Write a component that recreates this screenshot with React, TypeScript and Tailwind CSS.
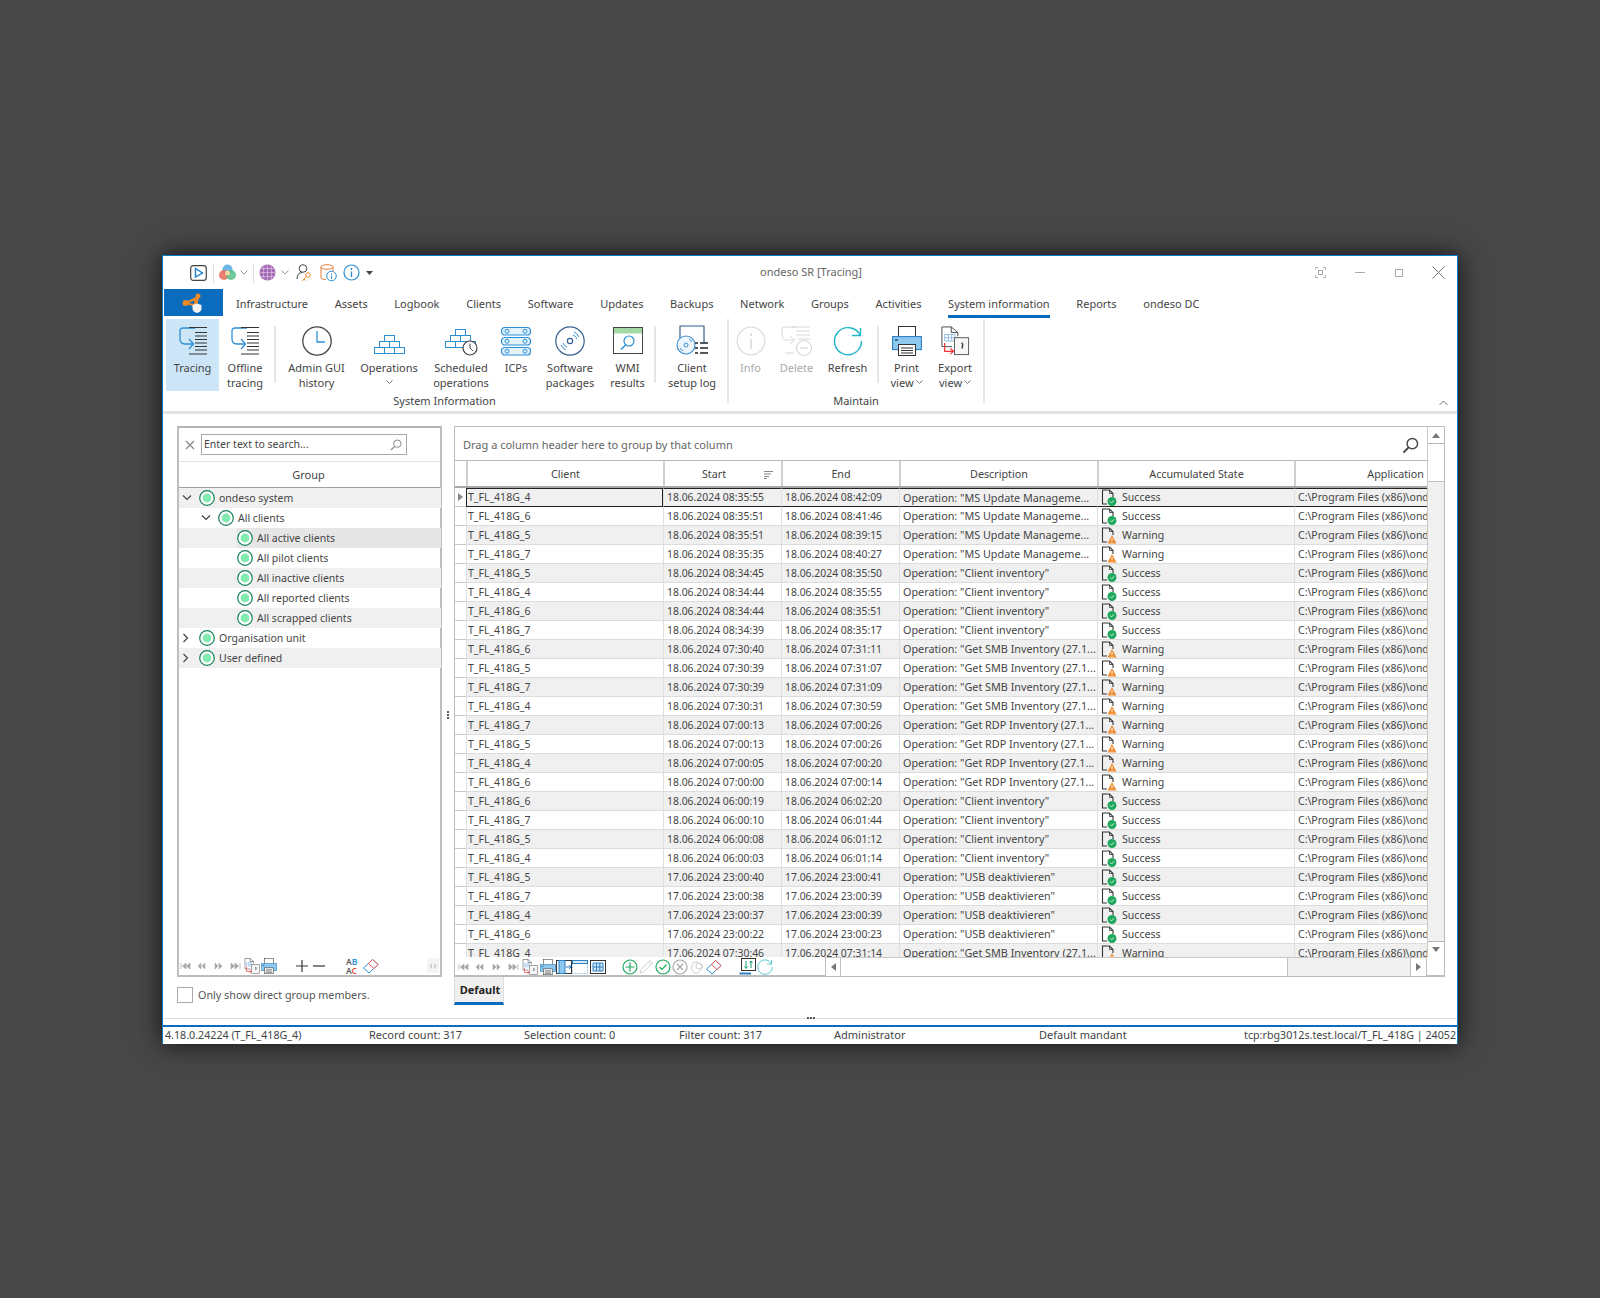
import type { ReactNode } from 'react';

type State = 'Success' | 'Warning';

interface LogRow {
  client: string;
  start: string;
  end: string;
  description: string;
  state: State;
}

const ms = 'Operation: "MS Update Manageme...';
const inv = 'Operation: "Client inventory"';
const smb = 'Operation: "Get SMB Inventory (27.1...';
const rdp = 'Operation: "Get RDP Inventory (27.1...';
const usb = 'Operation: "USB deaktivieren"';

const raw: [string, string, string, string, string, State][] = [
  ['4', '18.06.2024', '08:35:55', '08:42:09', ms, 'Success'],
  ['6', '18.06.2024', '08:35:51', '08:41:46', ms, 'Success'],
  ['5', '18.06.2024', '08:35:51', '08:39:15', ms, 'Warning'],
  ['7', '18.06.2024', '08:35:35', '08:40:27', ms, 'Warning'],
  ['5', '18.06.2024', '08:34:45', '08:35:50', inv, 'Success'],
  ['4', '18.06.2024', '08:34:44', '08:35:55', inv, 'Success'],
  ['6', '18.06.2024', '08:34:44', '08:35:51', inv, 'Success'],
  ['7', '18.06.2024', '08:34:39', '08:35:17', inv, 'Success'],
  ['6', '18.06.2024', '07:30:40', '07:31:11', smb, 'Warning'],
  ['5', '18.06.2024', '07:30:39', '07:31:07', smb, 'Warning'],
  ['7', '18.06.2024', '07:30:39', '07:31:09', smb, 'Warning'],
  ['4', '18.06.2024', '07:30:31', '07:30:59', smb, 'Warning'],
  ['7', '18.06.2024', '07:00:13', '07:00:26', rdp, 'Warning'],
  ['5', '18.06.2024', '07:00:13', '07:00:26', rdp, 'Warning'],
  ['4', '18.06.2024', '07:00:05', '07:00:20', rdp, 'Warning'],
  ['6', '18.06.2024', '07:00:00', '07:00:14', rdp, 'Warning'],
  ['6', '18.06.2024', '06:00:19', '06:02:20', inv, 'Success'],
  ['7', '18.06.2024', '06:00:10', '06:01:44', inv, 'Success'],
  ['5', '18.06.2024', '06:00:08', '06:01:12', inv, 'Success'],
  ['4', '18.06.2024', '06:00:03', '06:01:14', inv, 'Success'],
  ['5', '17.06.2024', '23:00:40', '23:00:41', usb, 'Success'],
  ['7', '17.06.2024', '23:00:38', '23:00:39', usb, 'Success'],
  ['4', '17.06.2024', '23:00:37', '23:00:39', usb, 'Success'],
  ['6', '17.06.2024', '23:00:22', '23:00:23', usb, 'Success'],
  ['4', '17.06.2024', '07:30:46', '07:31:14', smb, 'Warning'],
];

const rows: LogRow[] = raw.map(([n, d, s, e, description, state]) => ({
  client: `T_FL_418G_${n}`,
  start: `${d} ${s}`,
  end: `${d} ${e}`,
  description,
  state,
}));

const tabs = ['Infrastructure', 'Assets', 'Logbook', 'Clients', 'Software', 'Updates', 'Backups', 'Network', 'Groups', 'Activities'];
const colsClass = 'grid grid-cols-[11px_197px_118px_118px_198px_197px_133px]';

function Icon({ w, h = w, children, className }: { w: number; h?: number; children: ReactNode; className?: string }) {
  return (
    <svg width={w} height={h} viewBox={`0 0 ${w} ${h}`} fill="none" className={`shrink-0 ${className ?? ''}`}>
      {children}
    </svg>
  );
}

function Chevron({ w = 8, up = false, color = '#777' }: { w?: number; up?: boolean; color?: string }) {
  const h = w / 2 + 1;
  return (
    <Icon w={w} h={h}>
      <path d={up ? `M.5 ${h - 0.5}L${w / 2} 1L${w - 0.5} ${h - 0.5}` : `M.5 .5L${w / 2} ${h - 1}L${w - 0.5} .5`} stroke={color} />
    </Icon>
  );
}

function TraceIcon() {
  const blue = '#2b8fd6';
  const ink = '#333';
  return (
    <Icon w={30} h={30}>
      <path d="M17 2H5Q2 2 2 5V13Q2 18 7 18H15" stroke={blue} strokeWidth="1.3" />
      <path d="M11 13L15.5 18L11 23" stroke={blue} strokeWidth="1.3" />
      <path d="M11 1.5H29M17 6.5H29M17 10H29M17 13.5H29M17 17H29M17 20.5H29M17 24H29M11 28H29" stroke={ink} strokeWidth="1" />
    </Icon>
  );
}

function Clock({ size = 30 }: { size?: number }) {
  const c = size / 2;
  return (
    <Icon w={size} h={size}>
      <circle cx={c} cy={c} r={c - 0.8} stroke="#444" strokeWidth="1.3" />
      <path d={`M${c} ${c - 10}V${c + 1}H${c + 8}`} stroke="#2b8fd6" strokeWidth="1.3" />
    </Icon>
  );
}

function Bricks() {
  return (
    <g stroke="#2b8fd6" strokeWidth="1">
      <rect x="11.5" y=".5" width="10" height="6" />
      <rect x="6.5" y="6.5" width="10" height="6" />
      <rect x="16.5" y="6.5" width="10" height="6" />
      <rect x="1.5" y="12.5" width="10" height="6" />
      <rect x="11.5" y="12.5" width="10" height="6" />
      <rect x="21.5" y="12.5" width="10" height="6" />
    </g>
  );
}

function OperationsIcon() {
  return (
    <Icon w={33} h={30}>
      <g transform="translate(0 9)">
        <Bricks />
      </g>
    </Icon>
  );
}

function ScheduledIcon() {
  return (
    <Icon w={34} h={30}>
      <g transform="translate(0 3)">
        <Bricks />
      </g>
      <circle cx="26" cy="22" r="7" fill="#fff" stroke="#444" strokeWidth="1.2" />
      <path d="M26 17.5V22L29 25" stroke="#444" />
    </Icon>
  );
}

function IcpsIcon() {
  return (
    <Icon w={30} h={30}>
      {[1, 11, 21].map((y) => (
        <g key={y} stroke="#2b8fd6">
          <rect x=".5" y={y + 0.5} width="29" height="7.5" rx="3.5" fill="#e4f2fb" strokeWidth="1.2" />
          <circle cx="6" cy={y + 4.2} r="2" />
          <circle cx="24" cy={y + 4.2} r="2" />
        </g>
      ))}
    </Icon>
  );
}

function DiscIcon() {
  return (
    <Icon w={30} h={30}>
      <circle cx="15" cy="15" r="14.2" stroke="#35618f" strokeWidth="1.2" />
      <circle cx="15" cy="15" r="2.6" stroke="#35618f" strokeWidth="1.2" />
      <path d="M6 19Q8 23 11 24M8 17Q9 20 12 21M24 11Q22 7 19 6M22 13Q21 10 18 9" stroke="#3d8fd0" strokeWidth="1" />
    </Icon>
  );
}

function WmiIcon() {
  return (
    <Icon w={30} h={28}>
      <rect x=".5" y=".5" width="29" height="26" stroke="#444" />
      <rect x="1" y="1" width="28" height="5.5" fill="#a4d8a6" />
      <circle cx="16" cy="14" r="5" stroke="#2b8fd6" strokeWidth="1.2" />
      <path d="M12.5 18L8 22.5" stroke="#2b8fd6" strokeWidth="1.4" />
    </Icon>
  );
}

function SetupLogIcon() {
  return (
    <Icon w={32} h={32}>
      <path d="M4 13V1H28V18" stroke="#35618f" strokeWidth="1.2" />
      <circle cx="10" cy="20" r="9" fill="#eef6fc" stroke="#3d8fd0" strokeWidth="1.1" />
      <circle cx="10" cy="20" r="2" stroke="#3d8fd0" />
      <path d="M4 23Q5 25 7 26M16 17Q15 15 13 14" stroke="#3d8fd0" />
      <path d="M19 18H22M24 18H32M19 23H22M24 23H32M19 28H22M24 28H32" stroke="#222" strokeWidth="1.4" />
    </Icon>
  );
}

function InfoDim() {
  return (
    <Icon w={30} h={30}>
      <circle cx="15" cy="15" r="13.8" stroke="#dedede" strokeWidth="1.3" />
      <path d="M15 7V10M15 13V23" stroke="#dedede" strokeWidth="1.8" />
    </Icon>
  );
}

function DeleteDim() {
  return (
    <Icon w={32} h={32}>
      <g stroke="#d8d8d8" strokeWidth="1">
        <path d="M15 2H4Q1 2 1 5V10Q1 15 6 15H13M9 11L13.5 15L9 19" />
        <path d="M10 2H29M15 6H29M15 10H29M17 14H29M4 28H13" />
      </g>
      <circle cx="23" cy="23" r="7.5" fill="#fff" stroke="#d8d8d8" strokeWidth="1.2" />
      <path d="M19 23H27" stroke="#d8d8d8" strokeWidth="1.2" />
    </Icon>
  );
}

function RefreshIcon({ size = 30 }: { size?: number }) {
  return (
    <svg width={size} height={size} viewBox="0 0 30 30" fill="none" className="shrink-0">
      <path d="M27 9A13.5 13.5 0 1 0 28.5 15" stroke="#1db5c9" strokeWidth="1.4" />
      <path d="M27.5 2V9.5H19" stroke="#1db5c9" strokeWidth="1.4" />
    </svg>
  );
}

function PrinterIcon({ size = 30 }: { size?: number }) {
  return (
    <svg width={size} height={size} viewBox="0 0 30 30" fill="none" className="shrink-0">
      <rect x="6.5" y=".5" width="17" height="11" fill="#fff" stroke="#333" />
      <rect x=".6" y="10.6" width="28.8" height="13" fill="#8ec8ee" stroke="#2b7fc2" strokeWidth="1.1" />
      <rect x="3" y="13" width="3" height="2" fill="#2b6fa8" />
      <rect x="6.5" y="18.5" width="17" height="11" fill="#fff" stroke="#333" />
      <path d="M9 22H21M9 24.5H21M9 27H21" stroke="#333" />
    </svg>
  );
}

function ExportIcon({ size = 30 }: { size?: number }) {
  return (
    <svg width={size} height={size} viewBox="0 0 30 32" fill="none" className="shrink-0">
      <path d="M12 22H1V1H11L18 7V11" stroke="#444" />
      <path d="M11 1V7H18" stroke="#444" />
      <path d="M4 9H15V16H4ZM4 12.5H15M8 9V16M11.5 9V16" stroke="#8dbbe0" />
      <rect x="14.5" y="12.5" width="15" height="18" fill="#f6f6f6" stroke="#555" />
      <path d="M22 18Q24 19 22.5 24" stroke="#333" strokeWidth="1.5" />
      <path d="M4 18V27H13M10 24L13.5 27L10 30" stroke="#e33" strokeWidth="1.3" />
    </svg>
  );
}

function GroupDot() {
  return (
    <Icon w={16} h={16}>
      <circle cx="8" cy="8" r="7.3" fill="#fff" stroke="#14805a" strokeWidth="1.2" />
      <circle cx="8" cy="8" r="4.4" fill="#82eab0" />
    </Icon>
  );
}

function DocState({ state }: { state: State }) {
  return (
    <Icon w={18} h={17}>
      <path d="M6 15H1.5V1H8.5L12 4.5V8" stroke="#333" strokeWidth="1.1" />
      <path d="M8.5 1V4.5H12" stroke="#333" strokeWidth=".8" />
      {state === 'Success' ? (
        <>
          <circle cx="11" cy="12.5" r="4.5" fill="#1fa85b" />
          <path d="M9 12.5L10.5 14L13 11.3" stroke="#c8f0d8" />
        </>
      ) : (
        <>
          <path d="M11 8L15.5 16.5H6.5Z" fill="#ee8a2c" />
          <path d="M11 11V14M11 14.8V15.6" stroke="#fff" />
        </>
      )}
    </Icon>
  );
}

function SearchGlass({ size = 12, color = '#8a8a8a' }: { size?: number; color?: string }) {
  return (
    <svg width={size} height={size} viewBox="0 0 12 12" fill="none" className="shrink-0">
      <circle cx="7.3" cy="4.7" r="3.7" stroke={color} strokeWidth="1" />
      <path d="M4.6 7.4L1 11" stroke={color} strokeWidth="1.3" />
    </svg>
  );
}

function NavButtons({ className }: { className: string }) {
  return (
    <div className={`flex items-center ${className}`}>
      <Icon w={11} h={8}>
        <path d="M1 1V7M6 1L2.5 4L6 7ZM10 1L6.5 4L10 7Z" stroke="#a8a8a8" fill="#a8a8a8" strokeWidth=".7" />
      </Icon>
      <Icon w={9} h={8} className="ml-[6px]">
        <path d="M4 1L1 4L4 7ZM8 1L5 4L8 7Z" fill="#a8a8a8" stroke="#a8a8a8" strokeWidth=".6" />
      </Icon>
      <Icon w={9} h={8} className="ml-[8px]">
        <path d="M1 1L4 4L1 7ZM5 1L8 4L5 7Z" fill="#a8a8a8" stroke="#a8a8a8" strokeWidth=".6" />
      </Icon>
      <Icon w={11} h={8} className="ml-[7px]">
        <path d="M10 1V7M1 1L4.5 4L1 7ZM5 1L8.5 4L5 7Z" stroke="#a8a8a8" fill="#a8a8a8" strokeWidth=".7" />
      </Icon>
    </div>
  );
}

function Eraser() {
  return (
    <Icon w={18} h={18}>
      <path d="M1.5 11L10.5 2.5L16 7.5L7 16Z" stroke="#2b8fd6" fill="#fff" />
      <path d="M10.5 2.5L16 7.5L12 11.5L6.5 6.5Z" stroke="#e5534b" fill="#fff" />
    </Icon>
  );
}

function RibbonButton({
  width,
  icon,
  lines,
  dim = false,
  active = false,
  arrow = false,
  arrowBelow = false,
}: {
  width: string;
  icon: ReactNode;
  lines: string[];
  dim?: boolean;
  active?: boolean;
  arrow?: boolean;
  arrowBelow?: boolean;
}) {
  return (
    <div className={`${width} h-[72px] flex flex-col items-center shrink-0 ${active ? 'bg-[#cde6f7]' : ''}`}>
      <div className="h-[41px] flex items-center justify-center pt-[3px]">{icon}</div>
      <div className={`flex flex-col items-center leading-[15px] ${dim ? 'text-[#aaaaaa]' : 'text-[#444]'}`}>
        {lines.map((l, i) => (
          <span key={l} className="flex items-center gap-[2px] whitespace-nowrap">
            {l}
            {arrow && i === lines.length - 1 && <Chevron w={7} />}
          </span>
        ))}
        {arrowBelow && (
          <span className="h-[15px] flex items-center">
            <Chevron w={7} />
          </span>
        )}
      </div>
    </div>
  );
}

function RibbonSep({ className = '' }: { className?: string }) {
  return <div className={`w-[2px] h-[57px] mt-[7px] bg-[#e6e6e6] shrink-0 ${className}`} />;
}

function TreeRow({
  label,
  indent,
  chevron,
  alt = false,
  selected = false,
}: {
  label: string;
  indent: 'l1' | 'l2' | 'l3';
  chevron?: 'down' | 'right';
  alt?: boolean;
  selected?: boolean;
}) {
  const pad = indent === 'l1' ? 'pl-[2px]' : indent === 'l2' ? 'pl-[21px]' : 'pl-[40px]';
  return (
    <div className={`h-[20px] w-[262px] flex items-center ${pad} ${alt ? 'bg-[#f0f0f0]' : ''}`}>
      <div className="w-[18px] h-[20px] shrink-0 flex items-center pl-[1px]">
        {chevron === 'down' && (
          <Icon w={10} h={6}>
            <path d="M1 .5L5 4.5L9 .5" stroke="#444" strokeWidth="1.2" />
          </Icon>
        )}
        {chevron === 'right' && (
          <Icon w={6} h={10} className="ml-[1px]">
            <path d="M.5 1L4.5 5L.5 9" stroke="#444" strokeWidth="1.2" />
          </Icon>
        )}
      </div>
      <div className={`flex items-center self-stretch flex-1 ${selected ? 'bg-[#e6e6e6]' : ''}`}>
        <GroupDot />
        <span className="ml-[4px] pt-[2px] text-[#444] text-[10.5px] whitespace-nowrap">{label}</span>
      </div>
    </div>
  );
}

function LeftPanel() {
  return (
    <div className="w-[265px] flex flex-col shrink-0">
      <div className="h-[551px] border-2 border-[#bdbdbd] border-t-[#b4b4b4] flex flex-col">
        <div className="h-[34px] flex items-center pl-[6px] border-b border-[#e2e2e2]">
          <Icon w={10} h={10}>
            <path d="M1 1L9 9M9 1L1 9" stroke="#888" strokeWidth="1.2" />
          </Icon>
          <div className="ml-[6px] w-[206px] h-[21px] border border-[#a8a8a8] flex items-center justify-between pl-[2px] pr-[4px]">
            <span className="text-[#444] text-[10.5px]">Enter text to search...</span>
            <SearchGlass />
          </div>
        </div>
        <div className="h-[26px] flex items-center justify-center pt-[2px] pr-[2px] border-b border-[#a0a0a0] text-[#444]">Group</div>
        <div className="flex-1 flex flex-col">
          <TreeRow label="ondeso system" indent="l1" chevron="down" alt />
          <TreeRow label="All clients" indent="l2" chevron="down" />
          <TreeRow label="All active clients" indent="l3" alt selected />
          <TreeRow label="All pilot clients" indent="l3" />
          <TreeRow label="All inactive clients" indent="l3" alt />
          <TreeRow label="All reported clients" indent="l3" />
          <TreeRow label="All scrapped clients" indent="l3" alt />
          <TreeRow label="Organisation unit" indent="l1" chevron="right" />
          <TreeRow label="User defined" indent="l1" chevron="right" alt />
        </div>
        <div className="h-[19px] flex items-center pl-[1px]">
          <NavButtons className="w-[64px]" />
          <ExportIcon size={16} />
          <span className="ml-[1px]">
            <PrinterIcon size={16} />
          </span>
          <Icon w={14} h={14} className="ml-[18px]">
            <path d="M7 1V13M1 7H13" stroke="#333" strokeWidth="1.2" />
          </Icon>
          <Icon w={12} h={14} className="ml-[4px]">
            <path d="M0 7H12" stroke="#333" strokeWidth="1.2" />
          </Icon>
          <div className="ml-[21px] w-[16px] h-[18px] flex flex-col text-[8.5px] font-semibold">
            <span className="h-[9px] leading-[9px]">
              <span className="text-[#555]">A</span>
              <span className="text-[#2b8fd6]">B</span>
            </span>
            <span className="h-[9px] leading-[9px]">
              <span className="text-[#555]">A</span>
              <span className="text-[#e5534b]">C</span>
            </span>
          </div>
          <Eraser />
          <div className="ml-auto mr-[1px] w-[12px] h-[15px] bg-[#f4f4f4] flex items-center justify-center">
            <Icon w={10} h={8}>
              <path d="M4 1L1 4L4 7ZM6 1L9 4L6 7Z" fill="#d0d0d0" />
            </Icon>
          </div>
        </div>
      </div>
      <div className="flex items-center mt-[10px]">
        <div className="w-[16px] h-[16px] border border-[#a8a8a8]" />
        <span className="ml-[5px] text-[#555] text-[10.75px]">Only show direct group members.</span>
      </div>
    </div>
  );
}

function GridRow({ row, index }: { row: LogRow; index: number }) {
  const focused = index === 0;
  const bg = index % 2 === 0 ? 'bg-[#f0f0f0]' : 'bg-white';
  const line = focused ? 'border-y border-[#222]' : 'border-b border-[#dcdcdc]';
  const cell = `h-[19px] flex items-center pl-[3px] whitespace-nowrap overflow-hidden text-[#444] border-l border-l-[#dfdfdf] ${line}`;
  return (
    <div className={`${colsClass} ${bg}`}>
      <div className="h-[19px] bg-white border-b border-[#c8c8c8] flex items-center justify-center">
        {focused && (
          <Icon w={5} h={8}>
            <path d="M0 0L5 4L0 8Z" fill="#888" />
          </Icon>
        )}
      </div>
      <div className={`${cell} text-[10.5px] pt-[1px] ${focused ? '!border-l-[#222] border-r border-r-[#222] !pl-[1px]' : '!pl-[1px]'}`}>{row.client}</div>
      <div className={`${cell} text-[10.4px] pt-[1px]`}>{row.start}</div>
      <div className={`${cell} text-[10.4px] pt-[1px]`}>{row.end}</div>
      <div className={`${cell} text-[10.8px] pt-[1px]`}>{row.description}</div>
      <div className={cell}>
        <DocState state={row.state} />
        <span className="ml-[3px] pt-[1px] text-[10.6px]">{row.state}</span>
      </div>
      <div className={`${cell} text-[10.5px] pt-[1px]`}>C:\Program Files (x86)\ondeso\SR</div>
    </div>
  );
}

function HeaderCell({ children, right = false, className = '' }: { children?: ReactNode; right?: boolean; className?: string }) {
  return (
    <div className={`h-[25px] flex items-center pt-[2px] border-l-2 border-l-[#d0d0d0] text-[#444] text-[10.75px] relative ${right ? 'justify-end pr-[3px]' : 'justify-center'} ${className}`}>
      {children}
    </div>
  );
}

function GridToolbar() {
  return (
    <div className="w-[370px] shrink-0 h-[19px] flex items-center pl-[3px]">
      <NavButtons className="w-[64px]" />
      <ExportIcon size={16} />
      <span className="ml-[2px]">
        <PrinterIcon size={16} />
      </span>
      <Icon w={16} h={16}>
        <rect x=".5" y="1.5" width="15" height="13" stroke="#333" />
        <rect x="3" y="1.5" width="6" height="13" fill="#8ec8ee" stroke="#2b7fc2" />
        <path d="M10 8H15M13 6L15 8L13 10" stroke="#2b7fc2" />
      </Icon>
      <Icon w={16} h={16}>
        <rect x=".5" y="1.5" width="15" height="13" stroke="#9cc4e2" strokeDasharray="2 1" />
        <rect x=".5" y="1.5" width="15" height="3" fill="#d8ebf8" stroke="#2b7fc2" />
      </Icon>
      <Icon w={16} h={16} className="ml-[2px]">
        <rect x=".5" y="1.5" width="15" height="13" stroke="#333" />
        <path d="M3 4H13V12H3ZM3 8H13M6.5 4V12M9.8 4V12" stroke="#2b7fc2" fill="#cfe6f7" />
      </Icon>
      <Icon w={16} h={16} className="ml-[16px]">
        <circle cx="8" cy="8" r="7" stroke="#1fa85b" strokeWidth="1.2" />
        <path d="M8 3.5V12.5M3.5 8H12.5" stroke="#1fa85b" strokeWidth="1.2" />
      </Icon>
      <Icon w={16} h={16}>
        <path d="M2 14L3 10.5L12 1.5L14.5 4L5.5 13ZM10.5 3L13 5.5" stroke="#cfcfcf" />
      </Icon>
      <Icon w={16} h={16} className="ml-[1px]">
        <circle cx="8" cy="8" r="7" stroke="#1fa85b" strokeWidth="1.2" />
        <path d="M4.5 8L7 10.5L11.5 5.5" stroke="#1fa85b" strokeWidth="1.2" />
      </Icon>
      <Icon w={16} h={16} className="ml-[1px]">
        <circle cx="8" cy="8" r="7" stroke="#a8a8a8" strokeWidth="1.2" />
        <path d="M5 5L11 11M11 5L5 11" stroke="#a8a8a8" strokeWidth="1.2" />
      </Icon>
      <Icon w={16} h={16} className="ml-[1px]">
        <path d="M5 3H9L14 8L9 14H5L2 9Z" stroke="#d0d0d0" />
        <circle cx="10" cy="7" r="3" stroke="#d0d0d0" />
      </Icon>
      <Eraser />
      <Icon w={18} h={17} className="ml-[16px]">
        <rect x="2.5" y=".5" width="14" height="12" stroke="#333" />
        <path d="M7 3V10M5.5 8.5L7 10.5L8.5 8.5M12 10V3M10.5 5L12 3L13.5 5" stroke="#1b9e76" />
        <path d="M.5 15.5H12" stroke="#2b7fc2" strokeWidth="2" />
      </Icon>
      <span>
        <RefreshIcon size={16} />
      </span>
    </div>
  );
}

function GridPanel() {
  return (
    <div className="w-[991px] shrink-0 flex flex-col ml-[12px]">
      <div className="h-[551px] border-b-2 border-r border-l border-t border-[#bdbdbd] flex flex-col">
        <div className="flex h-[530px]">
          <div className="w-[972px] flex flex-col">
            <div className="h-[34px] shrink-0 flex items-center justify-between pl-[8px] pr-[8px] pt-[3px] border-b border-[#b8b8b8]">
              <span className="text-[#666] text-[11px]">Drag a column header here to group by that column</span>
              <SearchGlass size={17} color="#444" />
            </div>
            <div className={`${colsClass} shrink-0 border-b-2 border-[#a8a8a8]`}>
              <div className="h-[25px]" />
              <HeaderCell>Client</HeaderCell>
              <HeaderCell className="pr-[18px]">
                Start
                <Icon w={9} h={8} className="absolute right-[8px] top-[10px]">
                  <path d="M0 .5H9M0 3H7M0 5.5H5M0 7.5H3" stroke="#888" />
                </Icon>
              </HeaderCell>
              <HeaderCell>End</HeaderCell>
              <HeaderCell>Description</HeaderCell>
              <HeaderCell>Accumulated State</HeaderCell>
              <HeaderCell right>Application</HeaderCell>
            </div>
            <div className="flex-1 overflow-hidden">
              {rows.map((r, i) => (
                <GridRow key={i} row={r} index={i} />
              ))}
            </div>
          </div>
          <div className="w-[17px] flex flex-col bg-[#f0f0f0] border-l border-[#c8c8c8]">
            <div className="h-[17px] bg-white border-b border-[#b8b8b8] flex items-center justify-center">
              <Icon w={8} h={5}>
                <path d="M4 0L8 5H0Z" fill="#777" />
              </Icon>
            </div>
            <div className="h-[38px] bg-white border-b border-[#c0c0c0]" />
            <div className="flex-1" />
            <div className="h-[16px] bg-white border-t border-[#b8b8b8] flex items-center justify-center">
              <Icon w={8} h={5}>
                <path d="M4 5L8 0H0Z" fill="#777" />
              </Icon>
            </div>
          </div>
        </div>
        <div className="h-[19px] flex">
          <GridToolbar />
          <div className="w-[602px] flex bg-[#f0f0f0] border-t border-[#c8c8c8]">
            <div className="w-[16px] bg-white border-x border-[#c0c0c0] flex items-center justify-center">
              <Icon w={5} h={8}>
                <path d="M5 0L0 4L5 8Z" fill="#777" />
              </Icon>
            </div>
            <div className="w-[447px] bg-white border-r border-[#c0c0c0]" />
            <div className="flex-1" />
            <div className="w-[17px] bg-white border-x border-[#c0c0c0] flex items-center justify-center">
              <Icon w={5} h={8}>
                <path d="M0 0L5 4L0 8Z" fill="#777" />
              </Icon>
            </div>
          </div>
        </div>
      </div>
      <div className="w-[50px] h-[28px] bg-[#f0f0f0] border-b-[3px] border-[#0b6bbd] flex items-center justify-center pl-[2px] pt-[1px] font-bold text-[#222] border-x border-x-[#dcdcdc]">
        Default
      </div>
    </div>
  );
}

export default function App() {
  return (
    <div className="min-h-[1298px] bg-[#474747] pt-[255px] pl-[162px] font-['Noto_Sans',sans-serif] text-[11px]">
      <div className="w-[1296px] h-[789px] bg-white border border-[#0b7ac4] border-b-0 shadow-[0_0_24px_rgba(0,0,0,0.75)] flex flex-col">
        {/* title bar */}
        <div className="h-[33px] flex items-center relative shrink-0">
          <div className="flex items-center pl-[27px]">
            <Icon w={17} h={16}>
              <rect x=".7" y=".7" width="15.6" height="14.6" rx="2.5" stroke="#444" strokeWidth="1.2" />
              <path d="M5.5 3.5V12L12.5 8Z" stroke="#1d7fd0" strokeWidth="1.4" />
            </Icon>
            <div className="w-px h-[20px] bg-[#dddddd] ml-[6px]" />
            <Icon w={17} h={17} className="ml-[5px]">
              <circle cx="8.5" cy="5.5" r="5" fill="#6fb6e8" />
              <circle cx="5" cy="11" r="5" fill="#e86a5c" fillOpacity=".85" />
              <circle cx="12" cy="11" r="5" fill="#56c08a" fillOpacity=".85" />
              <circle cx="8.5" cy="9" r="2.5" fill="#f3d6a0" />
            </Icon>
            <span className="ml-[4px]">
              <Chevron w={8} color="#999" />
            </span>
            <div className="w-px h-[20px] bg-[#dddddd] ml-[5px]" />
            <Icon w={17} h={17} className="ml-[5px]">
              <circle cx="8.5" cy="8.5" r="8" fill="#a56ab5" />
              <path d="M.5 8.5H16.5M8.5 .5V16.5M2 4.5H15M2 12.5H15M5 1.5Q3.5 8.5 5 15.5M12 1.5Q13.5 8.5 12 15.5" stroke="#e3cfe9" strokeWidth=".6" />
            </Icon>
            <span className="ml-[5px]">
              <Chevron w={8} color="#999" />
            </span>
            <Icon w={18} h={18} className="ml-[7px]">
              <circle cx="7" cy="4.5" r="3.8" stroke="#444" />
              <path d="M1 15Q1 9 6 8.5" stroke="#444" />
              <circle cx="12" cy="11" r="2.3" stroke="#e88d2e" />
              <path d="M10.5 12.5L6 17M8 15L9.5 16.5" stroke="#e88d2e" />
            </Icon>
            <Icon w={17} h={18} className="ml-[6px]">
              <path d="M1 3V14Q1 15.5 6 15.5M13 7V3" stroke="#e0803a" />
              <ellipse cx="7" cy="3" rx="6" ry="2.3" stroke="#e0803a" />
              <circle cx="11.5" cy="12" r="4.8" fill="#fff" stroke="#2b8fd6" />
              <path d="M11.5 9.5V10.5M11.5 11.5V15" stroke="#2b8fd6" />
            </Icon>
            <Icon w={17} h={17} className="ml-[6px]">
              <circle cx="8.5" cy="8.5" r="7.5" stroke="#2b8fd6" strokeWidth="1.2" />
              <path d="M8.5 4V6M8.5 7.5V13" stroke="#2b8fd6" strokeWidth="1.4" />
            </Icon>
            <Icon w={7} h={4} className="ml-[6px]">
              <path d="M0 0H7L3.5 4Z" fill="#444" />
            </Icon>
          </div>
          <span className="absolute left-[597px] text-[#666] text-[11px] whitespace-nowrap">ondeso SR [Tracing]</span>
          <div className="ml-auto flex items-center pr-[12px]">
            <Icon w={11} h={11}>
              <path d="M0 3V.5H3M8 .5H10.5V3M.5 8V10.5H3M8 10.5H10.5V8" stroke="#aaa" />
              <rect x="3.5" y="3.5" width="4" height="4" stroke="#aaa" />
            </Icon>
            <div className="w-[10px] h-px bg-[#aaaaaa] ml-[29px]" />
            <div className="w-[8px] h-[8px] border border-[#aaaaaa] ml-[30px]" />
            <Icon w={13} h={13} className="ml-[29px]">
              <path d="M.5 .5L12.5 12.5M12.5 .5L.5 12.5" stroke="#777" />
            </Icon>
          </div>
        </div>
        {/* tabs */}
        <div className="h-[30px] flex shrink-0">
          <div className="ml-[1px] w-[59px] h-[27px] bg-[#0b6bbd] flex items-center justify-center">
            <Icon w={24} h={22}>
              <path d="M4 11L16 5L14 14L4 11Z" fill="#f08a24" stroke="#f08a24" strokeWidth="2" />
              <path d="M6.5 11L12.5 8.5L12 12Z" fill="#0b6bbd" />
              <circle cx="3.5" cy="11" r="3" fill="#f08a24" />
              <circle cx="16" cy="4" r="2.5" fill="#f08a24" />
              <path d="M15 11.5L19.5 13V16.5Q19.5 19.5 15 21Q10.5 19.5 10.5 16.5V13Z" fill="#f2f2f2" />
            </Icon>
          </div>
          <div className="ml-[13px] flex gap-[26.7px] text-[#444] h-[29px] items-center">
            {tabs.map((t) => (
              <span key={t} className="whitespace-nowrap pt-[2px]">
                {t}
              </span>
            ))}
            <span className="whitespace-nowrap relative h-[29px] flex items-center pt-[2px]">
              System information
              <span className="absolute left-0 right-0 bottom-0 h-[3px] bg-[#0b6bbd]" />
            </span>
            <span className="whitespace-nowrap pt-[2px]">Reports</span>
            <span className="whitespace-nowrap pt-[2px]">ondeso DC</span>
          </div>
        </div>
        {/* ribbon */}
        <div className="h-[95px] flex pl-[3px] shrink-0 border-b-[3px] border-[#e4e4e4] relative">
          <div className="flex flex-col">
            <div className="flex">
              <RibbonButton width="w-[53px]" active icon={<TraceIcon />} lines={['Tracing']} />
              <RibbonButton width="w-[52px]" icon={<TraceIcon />} lines={['Offline', 'tracing']} />
              <RibbonSep className="ml-[3px]" />
              <RibbonButton width="w-[77px] pl-[4px]" icon={<Clock />} lines={['Admin GUI', 'history']} />
              <RibbonButton width="w-[72px]" icon={<OperationsIcon />} lines={['Operations']} arrowBelow />
              <RibbonButton width="w-[72px]" icon={<ScheduledIcon />} lines={['Scheduled', 'operations']} />
              <RibbonButton width="w-[38px]" icon={<IcpsIcon />} lines={['ICPs']} />
              <RibbonButton width="w-[70px]" icon={<DiscIcon />} lines={['Software', 'packages']} />
              <RibbonButton width="w-[45px]" icon={<WmiIcon />} lines={['WMI', 'results']} />
              <RibbonSep className="ml-[4px]" />
              <RibbonButton width="w-[67px] pl-[5px]" icon={<SetupLogIcon />} lines={['Client', 'setup log']} />
            </div>
            <div className="text-center text-[#444] leading-[15px] mt-[2px]">System Information</div>
          </div>
          <RibbonSep className="ml-[4px] !h-[84px] !mt-0" />
          <div className="flex flex-col">
            <div className="flex">
              <RibbonButton width="w-[43px]" dim icon={<InfoDim />} lines={['Info']} />
              <RibbonButton width="w-[48px] pl-[1px]" dim icon={<DeleteDim />} lines={['Delete']} />
              <RibbonButton width="w-[55px]" icon={<RefreshIcon />} lines={['Refresh']} />
              <RibbonSep className="ml-[2px]" />
              <RibbonButton width="w-[52px] pl-[3px]" icon={<PrinterIcon />} lines={['Print', 'view']} arrow />
              <RibbonButton width="w-[48px]" icon={<ExportIcon />} lines={['Export', 'view']} arrow />
            </div>
            <div className="text-center text-[#444] leading-[15px] mt-[2px] pl-[4px]">Maintain</div>
          </div>
          <RibbonSep className="ml-[4px] !h-[84px] !mt-0" />
          <div className="absolute right-[9px] bottom-[6px]">
            <Chevron w={9} up />
          </div>
        </div>
        {/* content */}
        <div className="flex pl-[14px] pt-[12px] h-[604px] shrink-0 relative">
          <LeftPanel />
          <GridPanel />
          <div className="absolute left-[284px] top-[297px] flex flex-col gap-[1px]">
            <div className="w-[2px] h-[2px] bg-[#555]" />
            <div className="w-[2px] h-[2px] bg-[#555]" />
            <div className="w-[2px] h-[2px] bg-[#555]" />
          </div>
        </div>
        {/* status */}
        <div className="flex-1 flex flex-col">
          <div className="h-[7px] border-t border-[#dedede] relative">
            <div className="absolute left-[644px] top-[-2px] flex gap-[1px]">
              <div className="w-[2px] h-[2px] bg-[#555]" />
              <div className="w-[2px] h-[2px] bg-[#555]" />
              <div className="w-[2px] h-[2px] bg-[#555]" />
            </div>
          </div>
          <div className="flex-1 border-t-2 border-[#0b6bbd] grid grid-cols-[204px_155px_155px_155px_205px_1fr] items-center pl-[2px] text-[#444] whitespace-nowrap">
            <span className="text-[10.7px]">4.18.0.24224 (T_FL_418G_4)</span>
            <span>Record count: 317</span>
            <span>Selection count: 0</span>
            <span>Filter count: 317</span>
            <span>Administrator</span>
            <div className="flex justify-between pr-[1px]">
              <span>Default mandant</span>
              <span className="text-[10.7px]">tcp:rbg3012s.test.local/T_FL_418G | 24052</span>
            </div>
          </div>
        </div>
      </div>
    </div>
  );
}
